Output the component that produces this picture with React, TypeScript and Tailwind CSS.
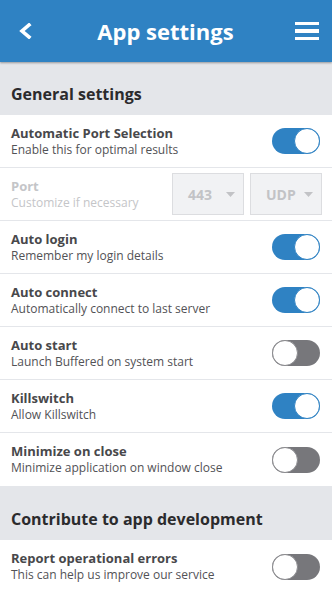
import React from "react";

type Row = { title: string; sub: string; on: boolean };

const general: Row[] = [
  { title: "Auto login", sub: "Remember my login details", on: true },
  { title: "Auto connect", sub: "Automatically connect to last server", on: true },
  { title: "Auto start", sub: "Launch Buffered on system start", on: false },
  { title: "Killswitch", sub: "Allow Killswitch", on: true },
  { title: "Minimize on close", sub: "Minimize application on window close", on: false },
];

const Toggle = ({ on }: { on: boolean }) => (
  <div
    className={`flex h-[26px] w-[48px] shrink-0 rounded-full ${
      on ? "justify-end bg-[#2f82c3]" : "justify-start bg-[#77777b]"
    }`}>
    <div
      className={`h-[26px] w-[26px] rounded-full border bg-white ${
        on ? "border-[#2f82c3]" : "border-[#8a8a8e]"
      }`}
    />
  </div>
);

const SettingRow = ({ title, sub, on, last }: Row & { last?: boolean }) => (
  <div
    className={`flex h-[53px] items-center justify-between bg-white pl-[11px] pr-[12px] ${
      last ? "" : "border-b border-[#e4e6ea]"
    }`}>
    <div className="flex flex-col">
      <span className="text-[13px] font-bold leading-[17px] text-[#48484b]">{title}</span>
      <span className="text-[12px] leading-[16px] text-[#525256]">{sub}</span>
    </div>
    <Toggle on={on} />
  </div>
);

const FakeSelect = ({ value }: { value: string }) => (
  <div className="flex h-[42px] w-[72px] items-center justify-between border border-[#dcdde0] bg-[#f1f2f4] pl-[15px] pr-[8px]">
    <span className="text-[14px] font-bold text-[#c2c3c6]">{value}</span>
    <svg width="9" height="5" viewBox="0 0 9 5">
      <path d="M0 0 L9 0 L4.5 5 Z" fill="#c2c3c6" />
    </svg>
  </div>
);

const SectionHead = ({ label, tall }: { label: string; tall?: boolean }) => (
  <div
    className={`flex items-end bg-[#e4e6ea] pl-[11px] pb-[10px] ${tall ? "h-[54px]" : "h-[53px]"}`}>
    <h2 className="text-[16px] font-bold leading-[22px] text-[#2b2b2d]">{label}</h2>
  </div>
);

export default function App() {
  return (
    <div
      className="h-[591px] w-[332px] overflow-hidden bg-white"
      style={{ fontFamily: '"Open Sans", "Noto Sans", sans-serif' }}>
      <header className="relative z-10 flex h-[62px] items-center justify-between bg-[#2f82c3] pl-[19px] pr-[13px] shadow-[0_1px_2px_rgba(0,0,0,0.35)]">
        <svg width="14" height="16" viewBox="0 0 14 16">
          <polyline
            points="10,2 3,8 10,14"
            fill="none"
            stroke="white"
            strokeWidth="3.6"
            strokeLinecap="square"
          />
        </svg>
        <h1 className="pl-[3px] text-[22px] font-bold text-white">App settings</h1>
        <div className="flex w-[24px] flex-col gap-[4px]">
          <span className="h-[3.5px] bg-white" />
          <span className="h-[3.5px] bg-white" />
          <span className="h-[3.5px] bg-white" />
        </div>
      </header>

      <SectionHead label="General settings" />

      <SettingRow title="Automatic Port Selection" sub="Enable this for optimal results" on />

      <div className="flex h-[53px] items-center justify-between border-b border-[#e4e6ea] bg-white pl-[11px] pr-[10px]">
        <div className="flex flex-col">
          <span className="text-[13px] font-bold leading-[17px] text-[#c4c5c8]">Port</span>
          <span className="text-[12px] leading-[16px] text-[#c4c5c8]">Customize if necessary</span>
        </div>
        <div className="flex gap-[6px]">
          <FakeSelect value="443" />
          <FakeSelect value="UDP" />
        </div>
      </div>

      {general.map((r, i) => (
        <SettingRow key={r.title} {...r} last={i === general.length - 1} />
      ))}

      <SectionHead label="Contribute to app development" tall />

      <SettingRow title="Report operational errors" sub="This can help us improve our service" on={false} last />
    </div>
  );
}
